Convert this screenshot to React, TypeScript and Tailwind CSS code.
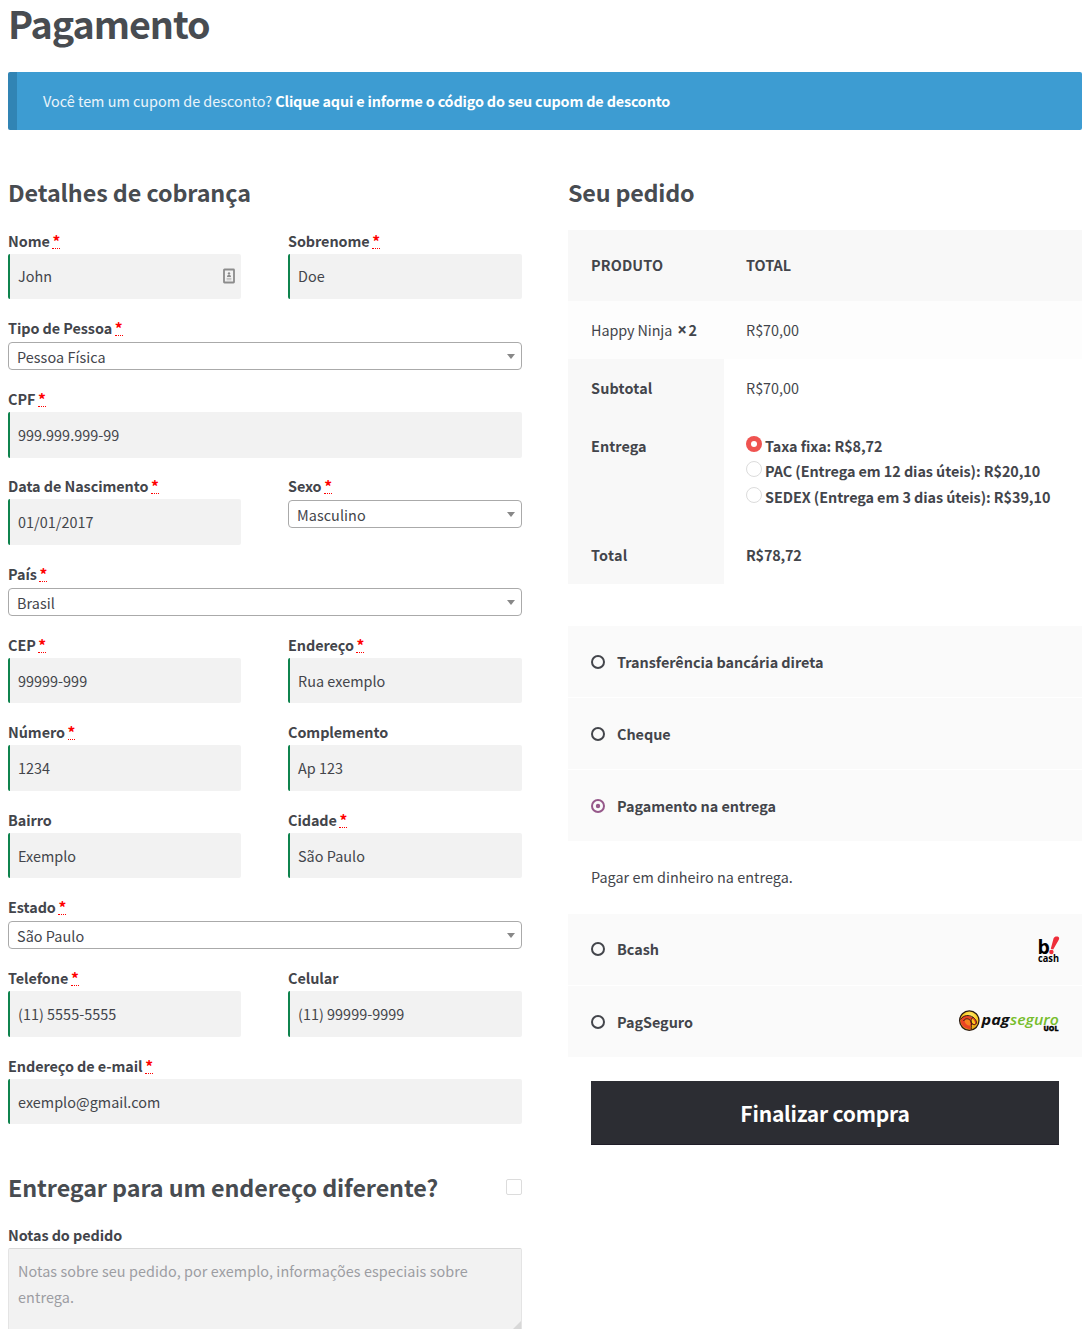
import React from "react";

type FieldProps = {
  label: string;
  required?: boolean;
  value: string;
  select?: boolean;
  tall?: boolean;
  icon?: boolean;
  raised?: boolean;
};

function Label({ text, required }: { text: string; required?: boolean }) {
  return (
    <div className="flex h-[26px] items-start whitespace-pre font-bold leading-[26px] tracking-[-0.06px]">
      <span>{text + (required ? " " : "")}</span>
      {required && (
        <span className="-ml-[0.6px] h-[21px] border-b border-dotted border-[#f00] text-[15.5px] text-[#f00]">*</span>
      )}
    </div>
  );
}

function ContactIcon() {
  return (
    <svg width="12" height="16" viewBox="0 0 12 16" fill="none" className="relative -top-px">
      <rect x="1" y="1.5" width="10" height="13" rx="0.5" stroke="#8c8c8c" strokeWidth="1.8" />
      <circle cx="6" cy="5.4" r="1.2" fill="#8c8c8c" />
      <path d="M4 9c0-1.500.8-2.300 2-2.300s2 .8 2 2.300z" fill="#8c8c8c" />
      <path d="M3.600 10.400h4.800M3.600 11.800h4.800" stroke="#b0b0b0" strokeWidth="0.8" />
    </svg>
  );
}

function Field({ label, required, value, select, tall, icon, raised }: FieldProps) {
  return (
    <div className="min-w-0">
      <Label text={label} required={required} />
      {select ? (
        <div className="mt-px flex h-7 items-center justify-between rounded-[4px] border border-[#aaa] bg-white pr-[6px] pl-2">
          <span className="pt-[2px] leading-[26px] tracking-[0.06px]">{value}</span>
          <svg width="8" height="5" viewBox="0 0 8 5">
            <path d="M0 0h8L4 5z" fill="#888" />
          </svg>
        </div>
      ) : (
        <div
          className={
            (tall ? "h-[46px]" : "h-[45px]") +
            " flex items-center justify-between rounded-[2px] border-l-2 border-[#0f834d] bg-[#f2f2f2] pr-[6px] pl-2"
          }
        >
          <span className={(raised ? "pb-[2px]" : "pb-0") + " leading-[26px] tracking-[0.03px]"}>{value}</span>
          {icon && <ContactIcon />}
        </div>
      )}
    </div>
  );
}

function Row({ height, full, children }: { height: string; full?: boolean; children: React.ReactNode }) {
  return (
    <div className={height + " grid gap-x-[47px] " + (full ? "grid-cols-1" : "grid-cols-[233px_234px]")}>
      {children}
    </div>
  );
}

function Shipping({ text, checked }: { text: string; checked?: boolean }) {
  return (
    <div className="flex items-start gap-[3px] font-bold tracking-[-0.07px]">
      {checked ? (
        <span className="flex size-4 items-center justify-center rounded-full bg-[#ef5350]">
          <span className="size-[6px] rounded-full bg-white" />
        </span>
      ) : (
        <span className="size-4 rounded-full border border-[#dcdcdc] bg-white" />
      )}
      <span className="h-[19px] pt-[2px] leading-4">{text}</span>
    </div>
  );
}

function Payment({
  text,
  checked,
  raised,
  children,
}: {
  text: string;
  checked?: boolean;
  raised?: boolean;
  children?: React.ReactNode;
}) {
  const color = checked ? "#96588a" : "#43454b";
  return (
    <div className="flex h-[71px] items-center justify-between bg-[#fafafa] px-[23px]">
      <div className={(raised ? "pb-[2px]" : "pb-0") + " flex items-center"}>
        <svg width="14" height="14" viewBox="0 0 14 14" fill="none">
          <circle cx="7" cy="7" r="6" stroke={color} strokeWidth="2" />
          {checked && <circle cx="7" cy="7" r="2.2" fill={color} />}
        </svg>
        <span className="ml-3 font-bold leading-[26px] tracking-[-0.03px]">{text}</span>
      </div>
      {children}
    </div>
  );
}

function BcashLogo() {
  return (
    <svg width="21" height="28" viewBox="0 0 21 28" className="overflow-visible">
      <text x="-0.5" y="17.500" fontFamily="Open Sans" fontWeight="700" fontSize="19.500" fill="#000">b</text>
      <path d="M15.600 2.200C16.400.6 18 .2 19.600.6c1.600.4 2 1.600 1.200 3.200L15.200 13.400l-2.400-.6z" fill="#ee2e3a" />
      <circle cx="13.400" cy="16" r="2.200" fill="#ee2e3a" />
      <text x="0" y="25.500" fontFamily="Open Sans" fontWeight="700" fontSize="10.500" textLength="21" lengthAdjust="spacingAndGlyphs" fill="#000">cash</text>
    </svg>
  );
}

function PagSeguroLogo() {
  return (
    <svg width="100" height="24" viewBox="0 0 100 24" className="relative -top-px overflow-visible">
      <defs>
        <radialGradient id="ball" cx="0.55" cy="0.3" r="0.75">
          <stop offset="0" stopColor="#fff07a" />
          <stop offset="0.5" stopColor="#fbc91e" />
          <stop offset="1" stopColor="#d98a10" />
        </radialGradient>
      </defs>
      <circle cx="10.300" cy="11.600" r="9.700" fill="url(#ball)" stroke="#2a1c14" strokeWidth="1.300" />
      <path d="M1.600 10.500C3 6.800 7 6.100 10 6.900c4 .8 7.500 3.500 7.800 7-.8 2-3 2.600-4.800 1.600-1.500 1-1.800 2.500-1 4.800C6 20 1 16.500 1.600 10.500z" fill="#ea4425" />
      <path d="M5.500 11c2-2 4.500-1.500 5.500.5.8 2 .3 3.500 0 5C8 16.500 5.500 14.500 5.500 11z" fill="#f58220" />
      <path d="M12.500 9.500c2.500 1 4 3.500 3.500 5.500-2.500.5-4.500-2.500-3.500-5.500z" fill="#fbc91e" />
      <path d="M1.500 10.500C4.500 6 10 5.500 14 8.200c4 2.800 4.500 6.800 1.500 7.500-3.500 0-5-4.500-1.500-7.500M4.500 12c2-3.500 6-2.500 7.500.5 1 2.500 0 5 .3 8" fill="none" stroke="#3b1a10" strokeWidth="1" />
      <text x="22.500" y="16" fontFamily="Open Sans" fontStyle="italic" fontWeight="700" fontSize="14.500" textLength="28" lengthAdjust="spacingAndGlyphs" fill="#111">pag</text>
      <text x="51" y="16" fontFamily="Open Sans" fontStyle="italic" fontWeight="600" fontSize="14.500" textLength="49" lengthAdjust="spacingAndGlyphs" fill="#76bd2b">seguro</text>
      <text x="84.500" y="22" fontFamily="Open Sans" fontWeight="800" fontSize="6.500" stroke="#000" strokeWidth="0.3" textLength="15" lengthAdjust="spacingAndGlyphs" fill="#000">UOL</text>
    </svg>
  );
}

export default function App() {
  return (
    <div className="h-[1338px] overflow-hidden bg-white px-2 pr-[7px] font-['Noto_Sans_CJK_SC',sans-serif] text-[14.4px] text-[#43454b]">
      <h1 className="h-[72px] text-[37.7px] font-bold leading-[45px] tracking-[-1.05px] text-[#484c51]">Pagamento</h1>

      <div className="flex h-[58px] items-center rounded-[2px] border-l-9 border-[#3184b4] bg-[#3d9cd2] pl-[26px] whitespace-pre text-white">
        <span className="text-white/90">Você tem um cupom de desconto? </span>
        <span className="font-bold tracking-[-0.17px]">Clique aqui e informe o código do seu cupom de desconto</span>
      </div>

      <div className="flex gap-[46px] pt-[46px]">
        <div className="w-[514px]">
          <h2 className="h-[52px] text-[23.3px] font-bold leading-[33px] tracking-[-0.08px] text-[#484c51]">Detalhes de cobrança</h2>
          <Row height="h-[87px]">
            <Field label="Nome" required value="John" icon raised />
            <Field label="Sobrenome" required value="Doe" raised />
          </Row>
          <Row height="h-[71px]" full>
            <Field label="Tipo de Pessoa" required value="Pessoa Física" select />
          </Row>
          <Row height="h-[87px]" full>
            <Field label="CPF" required value="999.999.999-99" tall />
          </Row>
          <Row height="h-[88px]">
            <Field label="Data de Nascimento" required value="01/01/2017" tall />
            <Field label="Sexo" required value="Masculino" select />
          </Row>
          <Row height="h-[71px]" full>
            <Field label="País" required value="Brasil" select />
          </Row>
          <Row height="h-[87px]">
            <Field label="CEP" required value="99999-999" />
            <Field label="Endereço" required value="Rua exemplo" />
          </Row>
          <Row height="h-[88px]">
            <Field label="Número" required value="1234" tall />
            <Field label="Complemento" value="Ap 123" tall />
          </Row>
          <Row height="h-[87px]">
            <Field label="Bairro" value="Exemplo" />
            <Field label="Cidade" required value="São Paulo" />
          </Row>
          <Row height="h-[71px]" full>
            <Field label="Estado" required value="São Paulo" select />
          </Row>
          <Row height="h-[88px]">
            <Field label="Telefone" required value="(11) 5555-5555" tall />
            <Field label="Celular" value="(11) 99999-9999" tall />
          </Row>
          <Row height="h-[118px]" full>
            <Field label="Endereço de e-mail" required value="exemplo@gmail.com" />
          </Row>
          <div className="flex h-[51px] items-start justify-between">
            <h2 className="text-[23.3px] font-bold leading-[33px] tracking-[-0.08px] text-[#484c51]">Entregar para um endereço diferente?</h2>
            <span className="mt-2 size-4 rounded-[2px] border border-[#dcdcdc] bg-white" />
          </div>
          <Label text="Notas do pedido" />
          <div className="flex h-[81px] items-end rounded-t-[2px] border border-b-0 border-[#e4e4e4] border-t-[#d8d8d8] bg-[#f2f2f2] pl-[9px]">
            <p className="h-[71px] flex-1 pr-10 leading-[26px] tracking-[0.08px] text-[#9c9da2]">Notas sobre seu pedido, por exemplo, informações especiais sobre entrega.</p>
            <svg width="8" height="8" viewBox="0 0 8 8" className="shrink-0">
              <path d="M8 0v8H0z" fill="#d8d8d8" />
            </svg>
          </div>
        </div>

        <div className="w-[514px]">
          <h2 className="h-[54px] text-[23.3px] font-bold leading-[33px] tracking-[-0.2px] text-[#484c51]">Seu pedido</h2>
          <div className="flex h-[71px] items-center bg-[#f8f8f8] pb-[2px] pl-[23px] font-bold">
            <span className="w-[155px] tracking-[0.15px]">PRODUTO</span>
            <span>TOTAL</span>
          </div>
          <div className="flex h-[58px] items-center bg-[#fdfdfd] pl-[23px]">
            <div className="flex w-[155px] items-center whitespace-pre">
              <span className="tracking-[-0.1px]">Happy Ninja</span>
              <b className="ml-[5px] font-['Open_Sans',sans-serif] text-[17px] leading-[21px]">×</b>
              <b className="ml-[1.5px]">2</b>
            </div>
            <span>R$70,00</span>
          </div>
          <div className="flex h-[58px]">
            <div className="flex w-[156px] items-center bg-[#f8f8f8] pl-[23px] font-bold tracking-[0.17px]">Subtotal</div>
            <div className="flex items-center pl-[22px]">R$70,00</div>
          </div>
          <div className="flex h-[109px]">
            <div className="w-[156px] bg-[#f8f8f8] pt-4 pl-[23px] font-bold leading-[26px] tracking-[0.06px]">Entrega</div>
            <div className="flex flex-col gap-[6.4px] pt-[19px] pl-[22px]">
              <Shipping text="Taxa fixa: R$8,72" checked />
              <Shipping text="PAC (Entrega em 12 dias úteis): R$20,10" />
              <Shipping text="SEDEX (Entrega em 3 dias úteis): R$39,10" />
            </div>
          </div>
          <div className="flex h-[58px] font-bold">
            <div className="flex w-[156px] items-center bg-[#f8f8f8] pl-[23px] tracking-[0.25px]">Total</div>
            <div className="flex items-center pl-[22px] tracking-[-0.2px]">R$78,72</div>
          </div>

          <div className="mt-[42px] flex flex-col gap-px">
            <Payment text="Transferência bancária direta" />
            <Payment text="Cheque" />
            <Payment text="Pagamento na entrega" checked />
            <div className="flex h-[71px] items-center pb-[2px] pl-[23px] tracking-[0.03px]">Pagar em dinheiro na entrega.</div>
            <Payment text="Bcash" raised>
              <BcashLogo />
            </Payment>
            <Payment text="PagSeguro">
              <PagSeguroLogo />
            </Payment>
          </div>
          <button className="mx-[23px] mt-6 flex h-16 w-[468px] items-center justify-center border-b border-[#1f1d28] bg-[#2c2d33] pt-[2px] text-[21px] font-bold tracking-[-0.2px] text-white">
            Finalizar compra
          </button>
        </div>
      </div>
    </div>
  );
}
